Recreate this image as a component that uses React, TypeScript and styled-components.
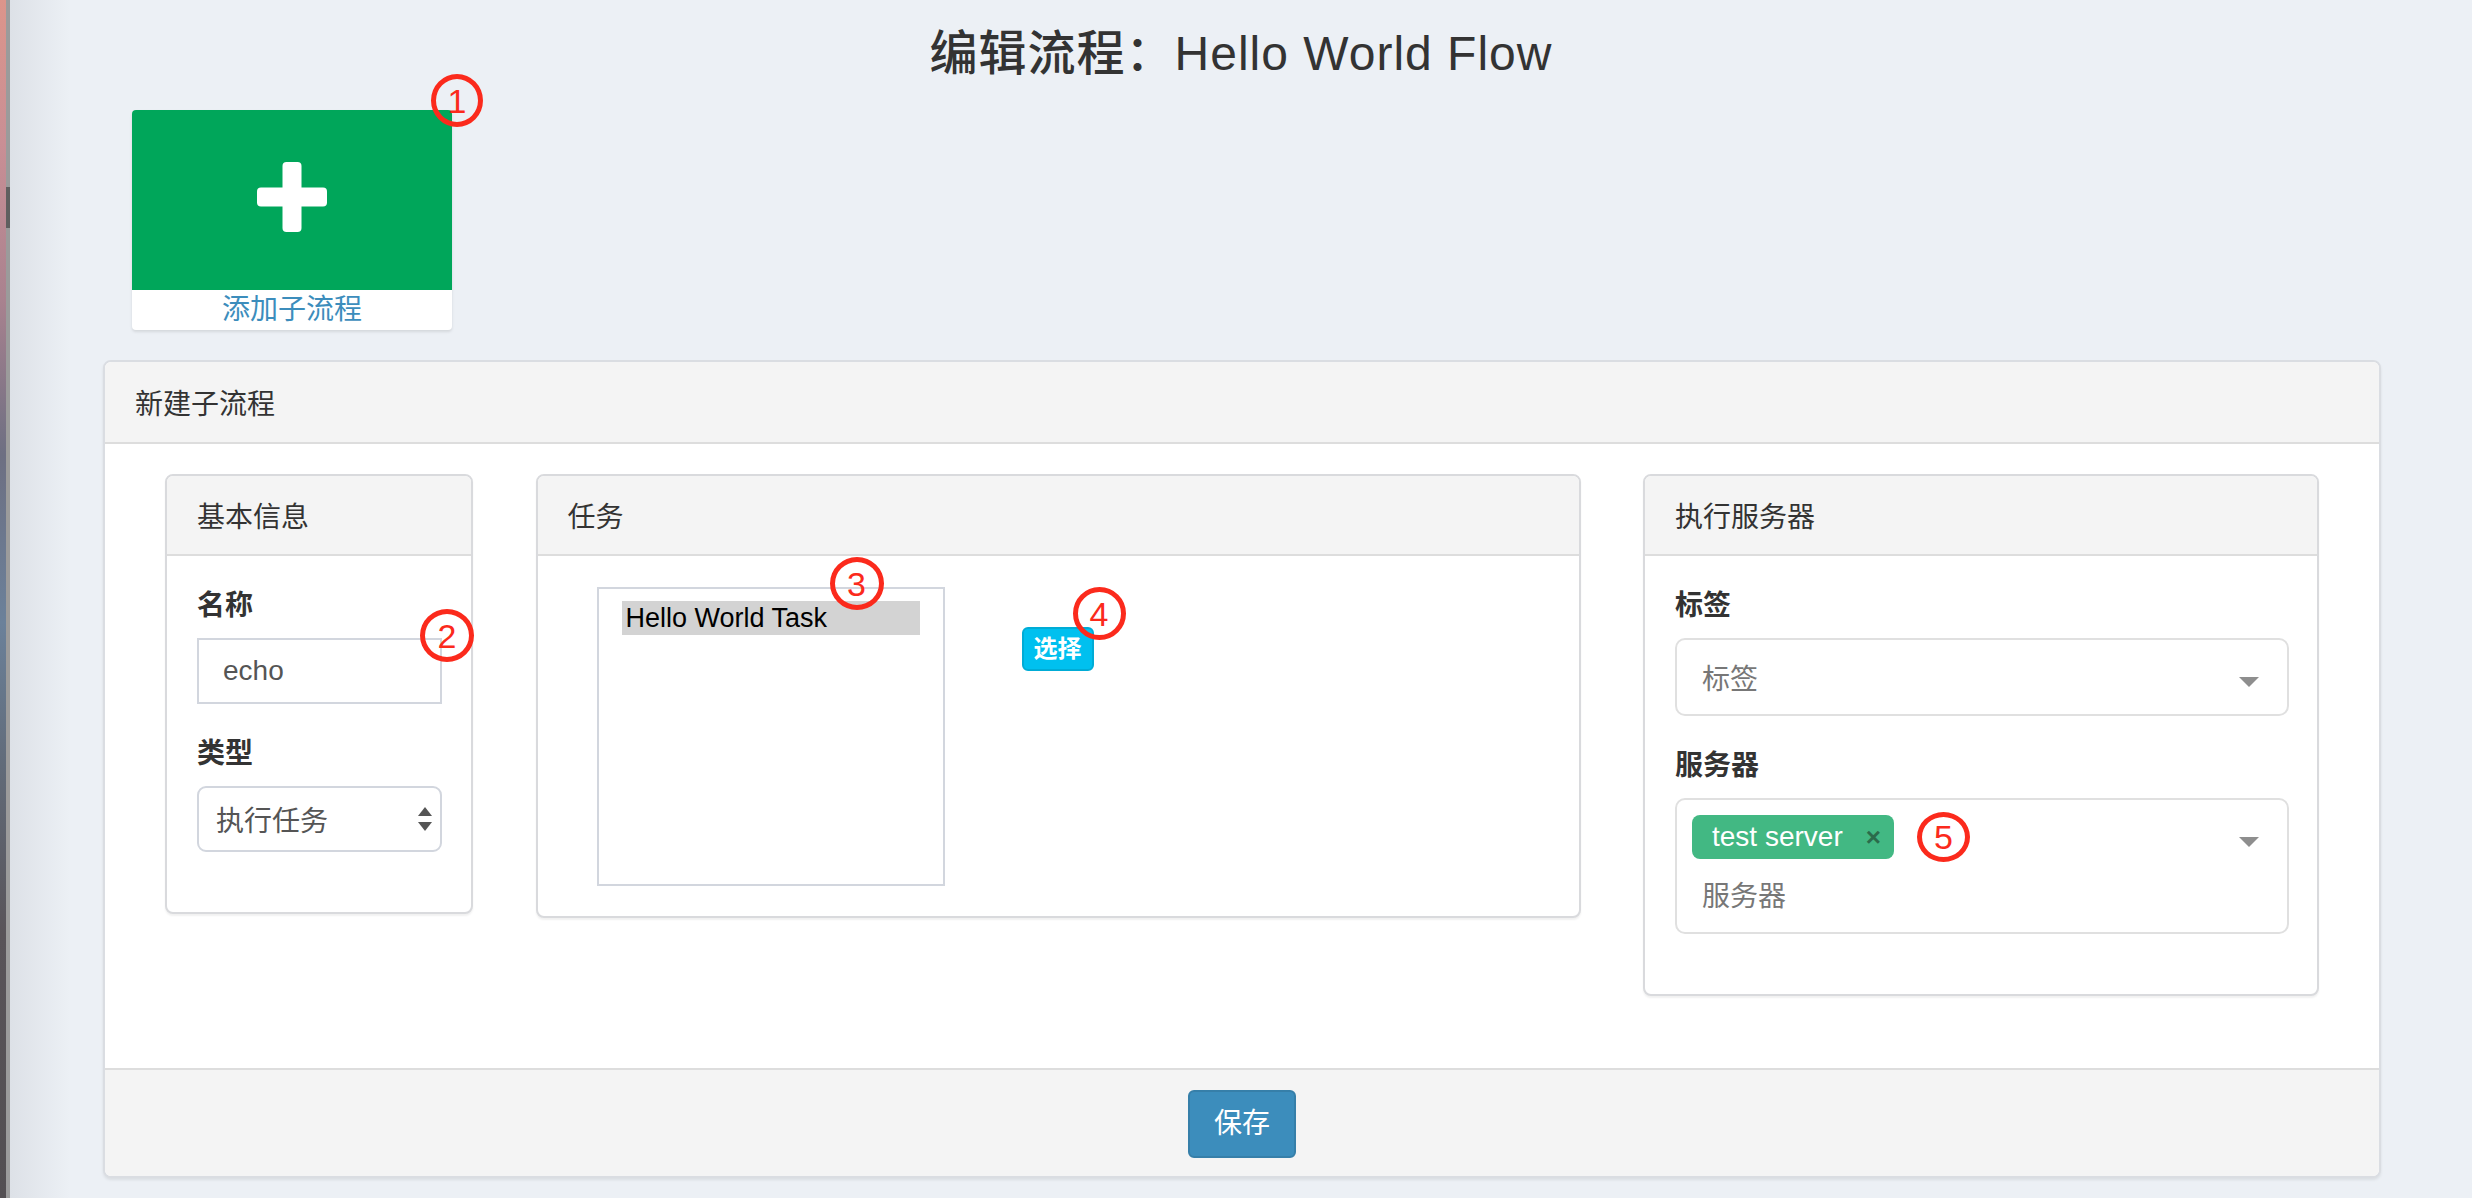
import styled, { createGlobalStyle } from "styled-components";

const GlobalStyle = createGlobalStyle`
  * {
    box-sizing: border-box;
  }
  html,
  body {
    margin: 0;
    padding: 0;
  }
  body {
    background: #ecf0f5;
    color: #333;
    font-family: "Liberation Sans", "Noto Sans CJK SC", sans-serif;
    font-size: 28px;
  }
`;

const App = () => {
  return (
    <Shell>
      <GlobalStyle />
      <DesktopStrip />
      <WindowEdge />
      <Main>
        <PageTitle>编辑流程：Hello World Flow</PageTitle>

        <AddCard>
          <AddCardTop>
            <svg width="70" height="70" viewBox="0 0 70 70">
              <rect x="0" y="25.5" width="70" height="19" rx="4" fill="#fff" />
              <rect x="25.5" y="0" width="19" height="70" rx="4" fill="#fff" />
            </svg>
          </AddCardTop>
          <AddCardLabel>添加子流程</AddCardLabel>
          <Marker $x={299} $y={-36} $w={52} $h={53}>1</Marker>
        </AddCard>

        <Box>
          <BoxHeader>新建子流程</BoxHeader>
          <BoxBody>
            <Panel>
              <PanelHeader>基本信息</PanelHeader>
              <PanelBody>
                <FormGroup>
                  <FieldLabel>名称</FieldLabel>
                  <Field>
                    <TextInput readOnly value="echo" />
                    <Marker $x={223} $y={-29} $w={54} $h={53}>2</Marker>
                  </Field>
                </FormGroup>
                <FormGroup>
                  <FieldLabel>类型</FieldLabel>
                  <NativeSelect>
                    <span>执行任务</span>
                    <Spinner>
                      <Arrow $dir="up" />
                      <Arrow $dir="down" />
                    </Spinner>
                  </NativeSelect>
                </FormGroup>
              </PanelBody>
            </Panel>

            <Panel>
              <PanelHeader>任务</PanelHeader>
              <TaskBody>
                <ListBox role="listbox">
                  <ListOption $selected>Hello World Task</ListOption>
                  <Marker $x={231} $y={-32} $w={54} $h={53}>3</Marker>
                </ListBox>
                <Field>
                  <PickButton>选择</PickButton>
                  <Marker $x={51} $y={0} $w={53} $h={53}>4</Marker>
                </Field>
              </TaskBody>
            </Panel>

            <Panel>
              <PanelHeader>执行服务器</PanelHeader>
              <PanelBody>
                <FormGroup>
                  <FieldLabel>标签</FieldLabel>
                  <ChoiceSelect>
                    <Placeholder>标签</Placeholder>
                    <Caret />
                  </ChoiceSelect>
                </FormGroup>
                <FormGroup>
                  <FieldLabel>服务器</FieldLabel>
                  <MultiSelect>
                    <TagRow>
                      <Tag>
                        test server
                        <TagClose>×</TagClose>
                        <Marker $x={225} $y={-3} $w={53} $h={50}>5</Marker>
                      </Tag>
                    </TagRow>
                    <MultiCaret />
                    <SearchPlaceholder>服务器</SearchPlaceholder>
                  </MultiSelect>
                </FormGroup>
              </PanelBody>
            </Panel>
          </BoxBody>
          <BoxFooter>
            <SaveButton>保存</SaveButton>
          </BoxFooter>
        </Box>
      </Main>
    </Shell>
  );
};

const Shell = styled.div`
  display: flex;
  min-height: 100vh;
`;

const DesktopStrip = styled.div`
  width: 6px;
  flex-shrink: 0;
  background: linear-gradient(
    to bottom,
    #dc958b 0%,
    #c98f95 12%,
    #a9828f 25%,
    #6d6f82 38%,
    #6b819a 52%,
    #616b79 64%,
    #595459 78%,
    #534f52 100%
  );
`;

const WindowEdge = styled.div`
  width: 4px;
  flex-shrink: 0;
  background: linear-gradient(
    to bottom,
    #9b9b9b 187px,
    #5f5f5f 187px,
    #5f5f5f 228px,
    #9b9b9b 228px
  );
`;

const Main = styled.main`
  flex: 1;
  background: linear-gradient(to right, #dde1e7 0, #ecf0f5 60px);
  padding-bottom: 20px;
`;

const PageTitle = styled.h3`
  margin: 0;
  padding-top: 29px;
  font-size: 48px;
  line-height: 50px;
  font-weight: 500;
  letter-spacing: 1px;
  text-align: center;
  color: #333;
`;

const Marker = styled.span<{ $x: number; $y: number; $w: number; $h: number }>`
  position: absolute;
  left: ${({ $x }) => `${$x}px`};
  top: ${({ $y }) => `${$y}px`};
  width: ${({ $w }) => `${$w}px`};
  height: ${({ $h }) => `${$h}px`};
  display: flex;
  justify-content: center;
  align-items: center;
  border: 5px solid #fb2a1c;
  border-radius: 50%;
  color: #fb2a1c;
  font-family: "Liberation Sans", sans-serif;
  font-size: 34px;
  font-weight: normal;
  letter-spacing: 0;
  line-height: 1;
`;

const AddCard = styled.div`
  position: relative;
  width: 320px;
  margin: 31px 0 0 122px;
  background: #fff;
  border-radius: 4px;
  box-shadow: 0 2px 3px rgba(0, 0, 0, 0.1);
`;

const AddCardTop = styled.div`
  height: 180px;
  display: flex;
  justify-content: center;
  align-items: center;
  padding-bottom: 6px;
  background: #00a65a;
  border-radius: 4px 4px 0 0;
`;

const AddCardLabel = styled.div`
  height: 40px;
  line-height: 40px;
  text-align: center;
  color: #3c8dbc;
  font-size: 28px;
`;

const Box = styled.section`
  margin: 30px 91px 0 93px;
  background: #fff;
  border: 2px solid #dadde2;
  border-radius: 8px;
  box-shadow: 0 2px 3px rgba(0, 0, 0, 0.08);
`;

const BoxHeader = styled.div`
  height: 82px;
  display: flex;
  align-items: center;
  padding: 0 30px;
  background: #f4f4f4;
  border-bottom: 2px solid #dddddd;
  border-radius: 6px 6px 0 0;
  font-size: 28px;
`;

const BoxBody = styled.div`
  display: grid;
  grid-template-columns: 308px 1045px 676px;
  justify-content: space-between;
  align-items: start;
  padding: 30px 60px 72px;
`;

const BoxFooter = styled.div`
  display: flex;
  justify-content: center;
  padding: 20px 0 18px;
  background: #f4f4f4;
  border-top: 2px solid #dddddd;
  border-radius: 0 0 6px 6px;
`;

const Panel = styled.div`
  background: #fff;
  border: 2px solid #d9dadd;
  border-radius: 8px;
  box-shadow: 0 2px 2px rgba(0, 0, 0, 0.06);
`;

const PanelHeader = styled.div`
  height: 80px;
  display: flex;
  align-items: center;
  padding: 0 30px;
  background: #f4f4f4;
  border-bottom: 2px solid #dddddd;
  border-radius: 6px 6px 0 0;
  font-size: 28px;
`;

const PanelBody = styled.div`
  padding: 30px 28px 30px 30px;
`;

const TaskBody = styled.div`
  display: flex;
  align-items: flex-start;
  gap: 77px;
  padding: 31px 30px 30px 59px;
`;

const FormGroup = styled.div`
  margin-bottom: 30px;
`;

const FieldLabel = styled.div`
  margin-bottom: 12px;
  font-size: 28px;
  line-height: 40px;
  font-weight: bold;
  color: #333;
`;

const Field = styled.div`
  position: relative;
`;

const TextInput = styled.input`
  display: block;
  width: 245px;
  height: 66px;
  padding: 0 24px;
  border: 2px solid #d2d6de;
  border-radius: 0;
  outline: none;
  background: #fff;
  color: #555;
  font-family: inherit;
  font-size: 28px;
`;

const NativeSelect = styled.div`
  width: 245px;
  height: 66px;
  display: flex;
  align-items: center;
  justify-content: space-between;
  padding: 0 8px 0 17px;
  border: 2px solid #d2d6de;
  border-radius: 9px;
  color: #555;
  font-size: 28px;
`;

const Spinner = styled.div`
  display: flex;
  flex-direction: column;
  gap: 6px;
`;

const Arrow = styled.span<{ $dir: "up" | "down" }>`
  width: 0;
  height: 0;
  border-left: 7px solid transparent;
  border-right: 7px solid transparent;
  ${({ $dir }) =>
    $dir === "up" ? "border-bottom: 9px solid #555;" : "border-top: 9px solid #555;"}
`;

const ListBox = styled.div`
  position: relative;
  flex-shrink: 0;
  width: 348px;
  height: 299px;
  padding: 12px 23px;
  border: 2px solid #d2d6de;
  background: #fff;
`;

const ListOption = styled.div<{ $selected?: boolean }>`
  height: 34px;
  line-height: 34px;
  padding-left: 4px;
  background: ${({ $selected }) => ($selected ? "#d3d3d3" : "transparent")};
  color: #000;
  font-size: 27px;
  white-space: nowrap;
`;

const PickButton = styled.button`
  display: block;
  margin-top: 40px;
  height: 44px;
  padding: 0 10px;
  border: 2px solid #00acd6;
  border-radius: 6px;
  background: #00c0ef;
  color: #fff;
  font-family: inherit;
  font-size: 24px;
  font-weight: bold;
  line-height: 28px;
`;

const ChoiceSelect = styled.div`
  height: 78px;
  display: flex;
  align-items: center;
  justify-content: space-between;
  padding: 0 28px 0 25px;
  border: 2px solid #e0e0e0;
  border-radius: 10px;
`;

const Placeholder = styled.span`
  color: #777;
  font-size: 28px;
`;

const Caret = styled.span`
  margin-top: 9px;
  width: 0;
  height: 0;
  border-left: 10px solid transparent;
  border-right: 10px solid transparent;
  border-top: 10px solid #8e8e8e;
`;

const MultiSelect = styled.div`
  height: 136px;
  display: grid;
  grid-template-columns: 1fr auto;
  padding: 15px;
  border: 2px solid #e0e0e0;
  border-radius: 10px;
`;

const TagRow = styled.div`
  display: flex;
`;

const Tag = styled.span`
  position: relative;
  height: 44px;
  display: flex;
  align-items: center;
  gap: 23px;
  padding: 0 13px 0 20px;
  background: #42b883;
  border-radius: 8px;
  color: #fff;
  font-size: 28px;
`;

const TagClose = styled.span`
  color: #2b6b4b;
  font-size: 26px;
  font-weight: bold;
`;

const MultiCaret = styled(Caret)`
  align-self: center;
  margin: 9px 13px 0 0;
`;

const SearchPlaceholder = styled.div`
  grid-column: 1 / -1;
  margin-top: 18px;
  padding-left: 10px;
  line-height: 40px;
  color: #777;
  font-size: 28px;
`;

const SaveButton = styled.button`
  height: 68px;
  padding: 0 24px;
  border: 2px solid #367fa9;
  border-radius: 6px;
  background: #3c8dbc;
  color: #fff;
  font-family: inherit;
  font-size: 28px;
  line-height: 40px;
`;

export default App;
